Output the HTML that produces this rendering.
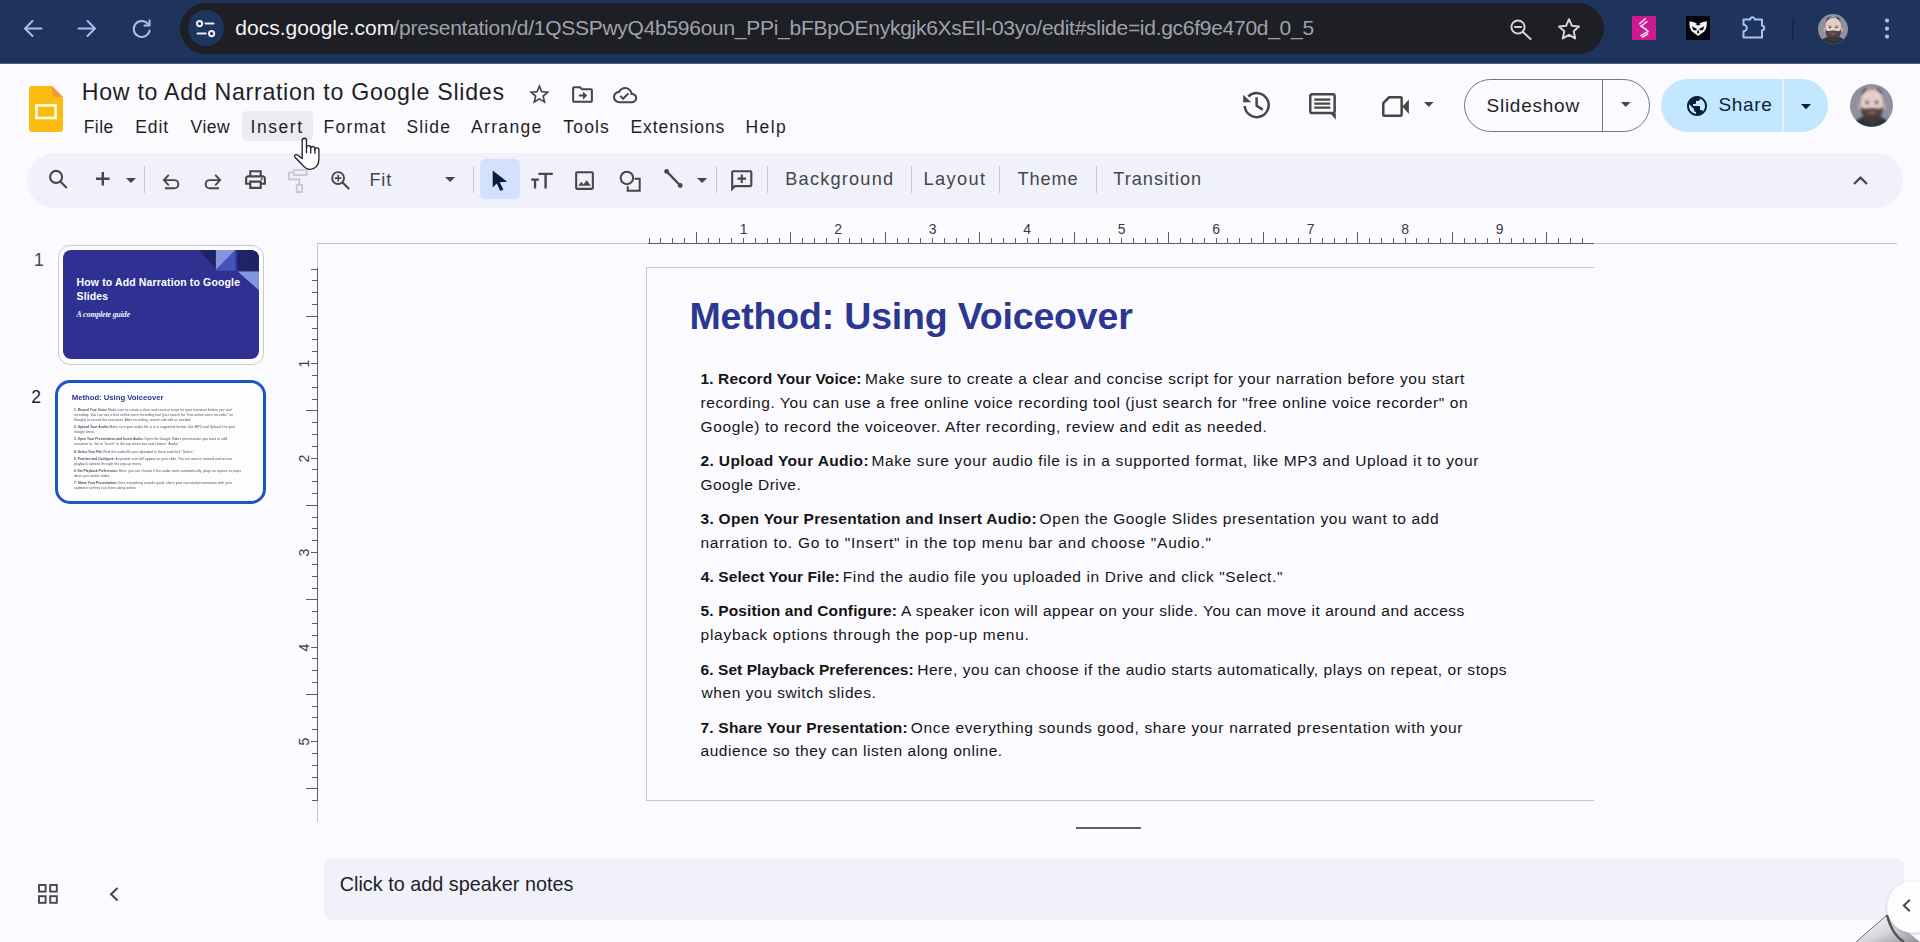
<!DOCTYPE html>
<html lang="en">
<head>
<meta charset="utf-8">
<title>How to Add Narration to Google Slides - Google Slides</title>
<style>
*{box-sizing:border-box;margin:0;padding:0}
html,body{width:1920px;height:942px;overflow:hidden;background:#fbfaff;font-family:"Liberation Sans",sans-serif;color:#1f1f1f}
.abs{position:absolute}
#chrome{position:absolute;left:0;top:0;width:1920px;height:64px;background:#1e345d;border-bottom:1px solid #4b6592}
#chrome .strip{position:absolute;left:0;top:57px;width:1920px;height:6px;background:#1c3158}
#omni{position:absolute;left:180px;top:3px;width:1424px;height:51px;border-radius:26px;background:#1e1f25}
#omni .site{position:absolute;left:7.500px;top:7.300px;width:36px;height:36px;border-radius:50%;background:#1e345d}
.url{position:absolute;left:56px;top:11px;font-size:20.5px;line-height:28px;white-space:nowrap;color:#9b9da6;letter-spacing:0px}
.url b{font-weight:normal;color:#f1f1f3}
svg{position:absolute;overflow:visible}
.t{position:absolute;white-space:nowrap;line-height:1}
#app{position:absolute;left:0;top:64px;width:1920px;height:878px;background:#fbfaff}
.menu{font-size:17.6px;color:#1f1f1f}
.tb{font-size:17.6px;color:#444746}
.sep{position:absolute;width:1px;background:#c7c7cc;top:166px;height:27px}

.urla{color:#f2f2f4}.urlb{color:#9ea2ae}
.avatar{border-radius:50%;overflow:hidden;background:radial-gradient(circle at 50% 38%,#d9b9a3 0 26%,rgba(0,0,0,0) 27%),radial-gradient(ellipse at 50% 60%,#3a2a22 0 30%,rgba(0,0,0,0) 31%),radial-gradient(ellipse at 50% 105%,#2c2f3a 0 38%,rgba(0,0,0,0) 39%),linear-gradient(#9aa3b0,#7f8894)}
.doctitle{color:#1f1f1f}
.btnl{color:#1f1f1f}.sharel{color:#0b1d3e}
.num{color:#444746}.num.sel{color:#1f1f1f}
.stitle{color:#2c3792}
.body{color:#141416}
.notes{color:#1f1f1f}
.rl{font-size:14px;color:#3a3b40;line-height:13px;height:13px}
.rv{transform:rotate(-90deg);transform-origin:50% 50%}
#th2 .body{color:#4a4a50}
</style>
</head>
<body>
<div id="app"></div>
<div id="chrome">
  <div class="strip"></div>
  <!-- back -->
  <svg style="left:22px;top:18px" width="22" height="22" viewBox="0 0 22 22" fill="none" stroke="#a9bdee" stroke-width="2" stroke-linecap="round" stroke-linejoin="round"><path d="M19.5 10.5H3.5M10.5 3L3 10.5 10.5 18"/></svg>
  <!-- forward -->
  <svg style="left:76px;top:18px" width="22" height="22" viewBox="0 0 22 22" fill="none" stroke="#a9bdee" stroke-width="2" stroke-linecap="round" stroke-linejoin="round"><path d="M2.5 10.5H18.5M11.5 3L19 10.5 11.5 18"/></svg>
  <!-- reload -->
  <svg style="left:131px;top:18px" width="22" height="22" viewBox="0 0 22 22" fill="none" stroke="#a9bdee" stroke-width="2" stroke-linecap="round" stroke-linejoin="round"><path d="M17.2 6.2A8 8 0 1 0 18.6 12.6"/><path d="M18.6 2.2V7.4H13.4"/></svg>
  <div id="omni">
    <div class="site"></div>
    <!-- tune icon -->
    <svg style="left:16px;top:17px" width="20" height="18" viewBox="0 0 20 18" fill="none" stroke="#e9ecf5" stroke-width="2" stroke-linecap="round"><circle cx="3.6" cy="3.6" r="2.6"/><path d="M9.5 3.6H17.5"/><circle cx="15.6" cy="13.6" r="2.6"/><path d="M1.5 13.6H9.8"/></svg>
    <!-- zoom out magnifier -->
    <svg style="left:1330px;top:16px" width="22" height="21" viewBox="0 0 22 21" fill="none" stroke="#d3d4da" stroke-width="2" stroke-linecap="round"><circle cx="8" cy="8" r="6.6"/><path d="M13 13L20.5 20"/><path d="M5 8H11" stroke-width="2.2"/></svg>
    <!-- star -->
    <svg style="left:1377px;top:14px" width="24" height="23" viewBox="0 0 24 23" fill="none" stroke="#d3d4da" stroke-width="2" stroke-linejoin="round"><path d="M12 2.2l2.95 6.6 7.05.75-5.3 4.8 1.5 7.05L12 17.8 5.8 21.4l1.5-7.05L2 9.55l7.05-.75z"/></svg>
  </div>
  <span class="t urla" style="left:235.30px;top:17.30px;font-size:21px;letter-spacing:0.014px">docs.google.com</span><span class="t urlb" style="left:393.50px;top:17.30px;font-size:21px;letter-spacing:-0.278px">/presentation/d/1QSSPwyQ4b596oun_PPi_bFBpOEnykgjk6XsEIl-03yo/edit#slide=id.gc6f9e470d_0_5</span>
  <!-- ext 1 pink -->
  <div class="abs" style="left:1632px;top:16px;width:24px;height:24px;background:#cd1b8f"></div>
  <svg style="left:1632px;top:16px" width="24" height="24" viewBox="0 0 24 24" fill="none" stroke="#e9e4fb" stroke-width="1.500" stroke-linecap="round"><path d="M13.300 2.700L7.600 7.800M14.800 5.600L9.200 10.300 14.200 13.400M9 9.600L15.200 14.800M16.200 15.400L8.800 19.600M15.800 18L10.400 21.200"/></svg>
  <!-- ext 2 black owl -->
  <div class="abs" style="left:1686.300px;top:16px;width:24px;height:24px;background:#04040a"></div>
  <svg style="left:1686.300px;top:16px" width="24" height="24" viewBox="0 0 24 24"><path d="M3.500 5.200C6.500 5.600 9.500 6.600 12.100 8.200 14.700 6.600 17.700 5.600 20.800 5.200 21 9.500 20.300 13.200 18.200 15.600L12.100 20 6 15.600C3.900 13.200 3.200 9.500 3.500 5.200z" fill="#f4f4f6"/><path d="M5.800 10.200L10.800 12.700 10.400 14.600 7.200 14zM18.400 10.200L13.400 12.700 13.800 14.600 17 14zM12.100 13.500L13.200 16.200 12.100 18 11 16.200zM9.500 8.300L12.100 9.600 14.700 8.300 12.100 7.100z" fill="#04040a"/></svg>
  <!-- puzzle -->
  <svg style="left:1740px;top:12px" width="30" height="30" viewBox="1740 12 30 30" fill="none" stroke="#a9c1f4" stroke-width="2" stroke-linejoin="round"><path d="M1743.500 19.400H1750.300a2.200 2.200 0 0 1 4.400 0H1762V25.800a2.200 2.200 0 0 1 0 4.400V37.400H1743.500V31.300a3.300 3.300 0 0 0 0-6.600z"/></svg>
  <div class="abs" style="left:1792px;top:18px;width:2px;height:22px;background:#15284d;border-radius:1px"></div>
  <!-- avatar -->
  <svg style="left:1818px;top:14px" width="30" height="30" viewBox="0 0 43 43"><defs><clipPath id="ac1"><circle cx="21.5" cy="21.5" r="21.5"/></clipPath><filter id="ab1" x="-10%" y="-10%" width="120%" height="120%"><feGaussianBlur stdDeviation=".8"/></filter></defs><g clip-path="url(#ac1)"><rect width="43" height="43" fill="#90919e"/><g filter="url(#ab1)"><path d="M2 43C4 36 11 33.500 15 32.500L28 32.500C33 33.500 39 36 41 43z" fill="#2b3142"/><ellipse cx="21.800" cy="9" rx="10.200" ry="6" fill="#56535a"/><path d="M17 5.500C20 3 24 3.200 26.500 6" stroke="#d8d8de" stroke-width="1.200" fill="none"/><ellipse cx="9.600" cy="22.800" rx="1.600" ry="2.800" fill="#d9aea6"/><ellipse cx="34.200" cy="22.800" rx="1.600" ry="2.800" fill="#d9aea6"/><ellipse cx="21.900" cy="18" rx="11.200" ry="12.600" fill="#e4cec7"/><path d="M10.800 21.500C10.500 31 15 39.200 21.900 39.200S33.300 31 33 21.500C31.500 25 29 24.600 26.500 24.300 23.500 23.500 20.300 23.500 17.300 24.300 14.800 24.600 12.300 25 10.800 21.500z" fill="#463a3b" opacity=".9"/><ellipse cx="21.900" cy="28.400" rx="3.300" ry="1" fill="#b9525e"/><ellipse cx="17.200" cy="19.300" rx="2" ry="1" fill="#5b4a49"/><ellipse cx="26.600" cy="19.300" rx="2" ry="1" fill="#5b4a49"/><path d="M14.500 17.300h5M24 17.300h5" stroke="#6b5752" stroke-width=".9"/></g></g></svg>
  <!-- dots -->
  <svg style="left:1883px;top:17px" width="8" height="24" viewBox="0 0 8 24" fill="#a9bdee"><circle cx="4" cy="3.6" r="2.100"/><circle cx="4" cy="11.700" r="2.100"/><circle cx="4" cy="19.600" r="2.100"/></svg>
</div>

<!-- slides logo -->
<svg style="left:29px;top:86px" width="34" height="46" viewBox="0 0 34 46"><path d="M3 0H23L34 11V43a3 3 0 0 1-3 3H3a3 3 0 0 1-3-3V3a3 3 0 0 1 3-3z" fill="#fbbc12"/><path d="M23 0L34 11H26a3 3 0 0 1-3-3z" fill="#f19a3e"/><rect x="7.400" y="19.400" width="19.200" height="12.600" fill="none" stroke="#fff9e6" stroke-width="2.600"/></svg>
<span class="t doctitle" style="left:81.75px;top:80.75px;font-size:23.2px;letter-spacing:0.701px">How to Add Narration to Google Slides</span>
<!-- star -->
<svg style="left:527px;top:82px" width="24.800" height="24.800" viewBox="0 0 24 24" fill="#444746"><path d="M22 9.240l-7.190-.620L12 2 9.190 8.630 2 9.240l5.460 4.730L5.820 21 12 17.270 18.180 21l-1.630-7.030L22 9.240zM12 15.400l-3.760 2.270 1-4.280-3.320-2.880 4.380-.380L12 6.100l1.710 4.040 4.380.380-3.320 2.880 1 4.280L12 15.400z"/></svg>
<!-- folder move -->
<svg style="left:570px;top:82.300px" width="25" height="25" viewBox="0 0 24 24" fill="#444746"><path d="M20 6h-8l-2-2H4c-1.100 0-2 .900-2 2v12c0 1.100.900 2 2 2h16c1.100 0 2-.900 2-2V8c0-1.100-.900-2-2-2zm0 12H4V6h5.170l2 2H20v10zm-7.500-1l4-4-4-4v3H8.500v2h4v3z"/></svg>
<!-- cloud done -->
<svg style="left:613.300px;top:82.600px" width="24.200" height="24.200" viewBox="0 0 24 24" fill="#444746"><path d="M19.350 10.040A7.490 7.490 0 0 0 12 4C9.110 4 6.600 5.640 5.350 8.040A5.994 5.994 0 0 0 0 14c0 3.310 2.690 6 6 6h13c2.760 0 5-2.240 5-5 0-2.640-2.050-4.780-4.650-4.960zM19 18H6c-2.210 0-4-1.790-4-4s1.790-4 4-4h.710C7.370 7.690 9.480 6 12 6c3.040 0 5.500 2.460 5.500 5.500v.500H19c1.660 0 3 1.340 3 3s-1.340 3-3 3zm-9-3.820l-2.090-2.090L6.500 13.500 10 17l6.010-6.010-1.410-1.410z"/></svg>
<!-- menu highlight -->
<div class="abs" style="left:242px;top:111px;width:71.400px;height:29.600px;border-radius:5px;background:#ebebf1"></div>
<span class="t menu" style="left:83.75px;top:118.50px;font-size:17.5px;letter-spacing:0.417px">File</span>
<span class="t menu" style="left:135.25px;top:118.50px;font-size:17.5px;letter-spacing:0.917px">Edit</span>
<span class="t menu" style="left:190.60px;top:118.50px;font-size:17.5px;letter-spacing:0.467px">View</span>
<span class="t menu" style="left:250.50px;top:118.50px;font-size:17.5px;letter-spacing:1.55px">Insert</span>
<span class="t menu" style="left:323.50px;top:118.50px;font-size:17.5px;letter-spacing:1.3px">Format</span>
<span class="t menu" style="left:406.50px;top:118.50px;font-size:17.5px;letter-spacing:1.125px">Slide</span>
<span class="t menu" style="left:471.00px;top:118.50px;font-size:17.5px;letter-spacing:1.333px">Arrange</span>
<span class="t menu" style="left:563.30px;top:118.50px;font-size:17.5px;letter-spacing:1.175px">Tools</span>
<span class="t menu" style="left:630.50px;top:118.50px;font-size:17.5px;letter-spacing:0.911px">Extensions</span>
<span class="t menu" style="left:745.50px;top:118.50px;font-size:17.5px;letter-spacing:1.4px">Help</span>
<!-- history -->
<svg style="left:1242.500px;top:91.900px" width="27" height="27" viewBox="0 0 27 27" fill="none" stroke="#444746" stroke-width="2.500"><path d="M5.300 4.500A12 12 0 1 1 1.700 14" /><path d="M13.600 5.300V13.700L19.800 17.600" stroke-linejoin="miter"/><path d="M0.200 2.700V10.200H8.200z" fill="#444746" stroke="none"/></svg>
<!-- comment -->
<svg style="left:1309px;top:92.800px" width="27" height="27" viewBox="0 0 27 27"><rect x="1.250" y="1.250" width="24.400" height="18.800" rx="1.800" fill="none" stroke="#444746" stroke-width="2.500"/><path d="M21.400 20.500H26.900V26.700z" fill="#444746"/><path d="M5.300 6.600H21.300M5.300 10.650H21.300M5.300 14.700H21.300" stroke="#444746" stroke-width="2.200"/></svg>
<!-- video -->
<svg style="left:1381.900px;top:95.900px" width="28" height="21" viewBox="0 0 28 21"><path d="M7.100 1.250H18.400a1.250 1.250 0 0 1 1.250 1.250V18.500a1.250 1.250 0 0 1-1.250 1.250H2.500a1.250 1.250 0 0 1-1.250-1.250V7.100z" fill="none" stroke="#444746" stroke-width="2.500" stroke-linejoin="round"/><path d="M20.400 10.600L26.900 3.500V17.900z" fill="#444746"/></svg>
<svg style="left:1424.200px;top:102px" width="9.600" height="5" viewBox="0 0 9.600 5"><path d="M0 0H9.600L4.800 5z" fill="#444746"/></svg>
<!-- slideshow button -->
<div class="abs" style="left:1464px;top:79px;width:185.500px;height:53px;border:1px solid #747775;border-radius:27px"></div>
<div class="abs" style="left:1602px;top:79.500px;width:1px;height:52px;background:#747775"></div>
<span class="t btnl" style="left:1486.50px;top:96.00px;font-size:19px;letter-spacing:0.75px">Slideshow</span>
<svg style="left:1620.500px;top:102px" width="9.600" height="5" viewBox="0 0 9.600 5"><path d="M0 0H9.600L4.800 5z" fill="#444746"/></svg>
<!-- share button -->
<div class="abs" style="left:1661px;top:79px;width:167px;height:53px;border-radius:27px;background:#c2e7ff"></div>
<div class="abs" style="left:1782px;top:79px;width:1.500px;height:53px;background:#e4f3ff"></div>
<svg style="left:1684.500px;top:93.600px" width="24" height="24" viewBox="0 0 24 24" fill="#0b1d3e"><path d="M12 2C6.480 2 2 6.480 2 12s4.480 10 10 10 10-4.480 10-10S17.520 2 12 2zm-1 17.930c-3.950-.490-7-3.850-7-7.930 0-.620.080-1.210.210-1.790L9 15v1c0 1.100.900 2 2 2v1.930zm6.900-2.540c-.260-.810-1-1.390-1.900-1.390h-1v-3c0-.550-.450-1-1-1H8v-2h2c.550 0 1-.450 1-1V7h2c1.100 0 2-.900 2-2v-.410c2.930 1.190 5 4.060 5 7.410 0 2.080-.800 3.970-2.100 5.390z"/></svg>
<span class="t sharel" style="left:1718.50px;top:95.30px;font-size:19px;letter-spacing:0.625px">Share</span>
<svg style="left:1801px;top:103.700px" width="10" height="5.200" viewBox="0 0 10 5.200"><path d="M0 0H10L5 5.200z" fill="#0b1d3e"/></svg>
<!-- avatar -->
<svg style="left:1850px;top:84px" width="43" height="43" viewBox="0 0 43 43"><defs><clipPath id="ac2"><circle cx="21.5" cy="21.5" r="21.5"/></clipPath><filter id="ab2" x="-10%" y="-10%" width="120%" height="120%"><feGaussianBlur stdDeviation=".8"/></filter></defs><g clip-path="url(#ac2)"><rect width="43" height="43" fill="#90919e"/><g filter="url(#ab2)"><path d="M2 43C4 36 11 33.500 15 32.500L28 32.500C33 33.500 39 36 41 43z" fill="#2b3142"/><ellipse cx="21.800" cy="9" rx="10.200" ry="6" fill="#56535a"/><path d="M17 5.500C20 3 24 3.200 26.500 6" stroke="#d8d8de" stroke-width="1.200" fill="none"/><ellipse cx="9.600" cy="22.800" rx="1.600" ry="2.800" fill="#d9aea6"/><ellipse cx="34.200" cy="22.800" rx="1.600" ry="2.800" fill="#d9aea6"/><ellipse cx="21.900" cy="18" rx="11.200" ry="12.600" fill="#e4cec7"/><path d="M10.800 21.500C10.500 31 15 39.200 21.900 39.200S33.300 31 33 21.500C31.500 25 29 24.600 26.500 24.300 23.500 23.500 20.300 23.500 17.300 24.300 14.800 24.600 12.300 25 10.800 21.500z" fill="#463a3b" opacity=".9"/><ellipse cx="21.900" cy="28.400" rx="3.300" ry="1" fill="#b9525e"/><ellipse cx="17.200" cy="19.300" rx="2" ry="1" fill="#5b4a49"/><ellipse cx="26.600" cy="19.300" rx="2" ry="1" fill="#5b4a49"/><path d="M14.500 17.300h5M24 17.300h5" stroke="#6b5752" stroke-width=".9"/></g></g></svg>
<!-- hand cursor -->
<svg style="left:294px;top:138px;z-index:20" width="26" height="33" viewBox="0 0 26 33" fill="#ffffff" stroke="#1d1d28" stroke-width="1.300" stroke-linejoin="round" stroke-linecap="round"><path d="M8.200 19.500V2.400a2.150 2.150 0 0 1 4.300 0V9.600a2.100 2.100 0 0 1 4.200.300v.500a2.100 2.100 0 0 1 4.200.500v.800a2 2 0 0 1 4 .500V21.500c0 6-4 9.800-8.600 9.800-3.400 0-5.500-1.400-8-4.500L1 19.200c-1.300-1.600.800-3.400 2.400-2.200L8.200 20.600z"/><path d="M12.500 9.600V14.800M16.700 10.400V15M20.900 11.200V15.200" fill="none"/></svg>

<div class="abs" style="left:27px;top:152.500px;width:1875.500px;height:55px;border-radius:27.500px;background:#f0f1fb"></div>
<!-- search -->
<svg style="left:48px;top:169px" width="20" height="20" viewBox="0 0 20 20" fill="none" stroke="#444746" stroke-width="2.100"><circle cx="8.100" cy="7.900" r="6"/><path d="M12.300 12.400L18.800 19" stroke-linecap="butt"/></svg>
<!-- plus -->
<svg style="left:95.500px;top:172.200px" width="13.600" height="13.600" viewBox="0 0 13.600 13.600" stroke="#444746" stroke-width="2.400"><path d="M0 6.800H13.600M6.800 0V13.600"/></svg>
<svg style="left:126.200px;top:177.800px" width="10" height="5" viewBox="0 0 10 5"><path d="M0 0H10L5 5z" fill="#444746"/></svg>
<div class="sep" style="left:144px"></div>
<!-- undo -->
<svg style="left:163px;top:173.500px" width="16" height="16" viewBox="0 0 16 16" fill="none" stroke="#444746" stroke-width="1.900" stroke-linejoin="miter"><path d="M5.800 0.800L0.900 6.100 5.800 11.400"/><path d="M1.200 6.100H11.300a4.050 4.050 0 0 1 0 8.100H2"/></svg>
<!-- redo -->
<svg style="left:205px;top:173.500px" width="16" height="16" viewBox="0 0 16 16" fill="none" stroke="#444746" stroke-width="1.900" stroke-linejoin="miter"><path d="M10.200 0.800L15.100 6.100 10.200 11.400"/><path d="M14.800 6.100H4.700a4.050 4.050 0 0 0 0 8.100H14"/></svg>
<!-- print -->
<svg style="left:243.100px;top:167.300px" width="25" height="25" viewBox="0 0 24 24" fill="#444746"><path d="M19 8h-1V3H6v5H5c-1.660 0-3 1.340-3 3v6h4v4h12v-4h4v-6c0-1.660-1.340-3-3-3zM8 5h8v3H8V5zm8 12v2H8v-4h8v2zm2-2v-2H6v2H4v-4c0-.550.450-1 1-1h14c.550 0 1 .450 1 1v4h-2z"/><circle cx="18" cy="11.500" r="1"/></svg>
<!-- paint format (disabled) -->
<svg style="left:288px;top:169px" width="20" height="24" viewBox="0 0 20 24" fill="none" stroke="#c5c5ca" stroke-width="1.700"><rect x="5.700" y="1" width="13" height="5"/><path d="M5.700 3.500H1V10.400H11.400V16"/><rect x="8.700" y="16" width="5.400" height="7"/></svg>
<!-- zoom in -->
<svg style="left:331px;top:171px" width="19" height="19" viewBox="0 0 19 19" fill="none" stroke="#444746" stroke-width="1.900"><circle cx="7.100" cy="7.100" r="5.950"/><path d="M11.600 11.600L18.100 18.100" stroke-width="2.100"/><path d="M3.800 7.100H10.400M7.100 3.800V10.400" stroke-width="1.600"/></svg>
<svg style="left:445px;top:177.300px" width="10.200" height="5" viewBox="0 0 10.200 5"><path d="M0 0H10.200L5.100 5z" fill="#444746"/></svg>
<div class="sep" style="left:473px"></div>
<!-- select -->
<div class="abs" style="left:479.700px;top:159.200px;width:40px;height:39.600px;border-radius:5px;background:#d3e1fc"></div>
<svg style="left:492px;top:170px" width="16" height="22" viewBox="0 0 16 22"><path d="M0.700 0.600V17.400L4.700 13.500 8.400 21 11.400 19.500 7.700 12.300 15.200 11.700z" fill="#0b1d3e"/></svg>
<!-- text box TT -->
<svg style="left:531px;top:172px" width="23" height="17" viewBox="0 0 23 17" fill="#444746"><path d="M0.200 6.400H7.900V8.700H5.200V16.600H2.900V8.700H0.200zM7.400 0.700H21.800V3H15.800V16.600H13.400V3H7.400z"/></svg>
<!-- image -->
<svg style="left:572.300px;top:168px" width="25" height="25" viewBox="0 0 24 24" fill="#444746"><path d="M19 5v14H5V5h14m0-2H5c-1.100 0-2 .900-2 2v14c0 1.100.900 2 2 2h14c1.100 0 2-.900 2-2V5c0-1.100-.900-2-2-2zm-4.860 8.860l-3 3.870L9 13.140 6 17h12l-3.860-5.140z"/></svg>
<!-- shape -->
<svg style="left:619px;top:169.500px" width="23" height="23" viewBox="0 0 23 23" fill="none" stroke="#444746" stroke-width="2"><circle cx="7.900" cy="7.900" r="6.250"/><path d="M15.500 8.700H20.700V20.700H8.700V16.300"/></svg>
<!-- line -->
<svg style="left:663px;top:168px" width="21" height="21" viewBox="0 0 21 21"><path d="M3.600 3.400L17.200 17.500" stroke="#444746" stroke-width="2.300"/><circle cx="3.600" cy="3.400" r="2.400" fill="#444746"/><circle cx="17.200" cy="17.500" r="2.400" fill="#444746"/></svg>
<svg style="left:697.300px;top:178px" width="10.200" height="5" viewBox="0 0 10.200 5"><path d="M0 0H10.200L5.100 5z" fill="#444746"/></svg>
<div class="sep" style="left:715.500px"></div>
<!-- add comment (tail left) -->
<svg style="left:728.500px;top:167.700px" width="25.500" height="25.500" viewBox="0 0 24 24" fill="#444746"><g transform="translate(24 0) scale(-1 1)"><path d="M22 4c0-1.100-.900-2-2-2H4c-1.100 0-2 .900-2 2v12c0 1.100.900 2 2 2h14l4 4V4zM4 4h16v13.170L18.830 16H4V4zm7 5H8v2h3v3h2v-3h3V9h-3V6h-2v3z"/></g></svg>
<div class="sep" style="left:767px"></div>
<div class="sep" style="left:910.500px"></div>
<div class="sep" style="left:998.500px"></div>
<div class="sep" style="left:1095.500px"></div>
<span class="t tb" style="left:369.50px;top:170.70px;font-size:18.2px;letter-spacing:0.75px">Fit</span>
<span class="t tb" style="left:785.30px;top:170.20px;font-size:18.2px;letter-spacing:1.189px">Background</span>
<span class="t tb" style="left:923.50px;top:170.20px;font-size:18.2px;letter-spacing:1.4px">Layout</span>
<span class="t tb" style="left:1017.50px;top:170.20px;font-size:18.2px;letter-spacing:0.875px">Theme</span>
<span class="t tb" style="left:1113.30px;top:170.20px;font-size:18.2px;letter-spacing:0.967px">Transition</span>
<!-- collapse chevron -->
<svg style="left:1853px;top:175.500px" width="15" height="9" viewBox="0 0 15 9" fill="none" stroke="#444746" stroke-width="2.200"><path d="M1 8L7.500 1.600 14 8"/></svg>

<span class="t num" style="left:34.00px;top:251.50px;font-size:17.5px;letter-spacing:0px">1</span>
<div class="abs" style="left:57.500px;top:245px;width:206px;height:119.500px;border:1px solid #c8c8cf;border-radius:12px;background:#fdfcff"></div>
<div class="abs" id="th1" style="left:62.800px;top:249.900px;width:195.800px;height:109.300px;border-radius:8px;background:#2e3191;overflow:hidden">
  <svg style="left:130px;top:0" width="66" height="45" viewBox="0 0 66 45"><defs><pattern id="hp" width="2" height="2" patternUnits="userSpaceOnUse" patternTransform="rotate(45)"><rect width="2" height="2" fill="#181c55"/><rect width="1" height="2" fill="#252a78"/></pattern></defs>
    <path d="M5.700 0H22.900V19.100z" fill="url(#hp)"/>
    <path d="M22.900 0H42.600L22.900 20.100z" fill="#8495e0"/>
    <path d="M42.600 0V20.700H22.900V20.100z" fill="#4354b8"/>
    <rect x="44.500" y="0" width="21.500" height="20.700" fill="url(#hp)"/>
    <path d="M44.800 21.600H66V40.400z" fill="#8495e0"/>
  </svg>
  <span class="t" style="left:13.700px;top:25.600px;font-size:10.500px;font-weight:700;color:#fff;line-height:14px;white-space:normal;width:182px;letter-spacing:.14px">How to Add Narration to Google Slides</span>
  <span class="t" style="left:13.800px;top:61.600px;font-size:7.800px;font-weight:700;font-style:italic;font-family:'Liberation Serif',serif;color:#f3f3fb;letter-spacing:-.1px">A complete guide</span>
</div>
<span class="t num sel" style="left:31.20px;top:388.80px;font-size:17.5px;letter-spacing:0px">2</span>
<div class="abs" style="left:55.400px;top:380.200px;width:210.600px;height:124.100px;border:3.300px solid #1a56c6;border-radius:15px;background:#fdfcff"></div>
<div class="abs" id="th2" style="left:62.800px;top:387.400px;width:945px;height:532px;transform:scale(.2072);transform-origin:0 0;overflow:hidden">
<span class="t stitle" style="left:42.00px;top:29.90px;font-size:37.5px;letter-spacing:-0.182px;font-weight:700">Method: Using Voiceover</span>
<span class="t body" style="left:53.00px;top:102.70px;font-size:15.5px;letter-spacing:0.125px;font-weight:700">1. Record Your Voice:</span>
<span class="t body" style="left:217.50px;top:102.70px;font-size:15.5px;letter-spacing:0.601px">Make sure to create a clear and concise script for your narration before you start</span>
<span class="t body" style="left:53.00px;top:126.80px;font-size:15.5px;letter-spacing:0.595px">recording. You can use a free online voice recording tool (just search for "free online voice recorder" on</span>
<span class="t body" style="left:53.00px;top:150.70px;font-size:15.5px;letter-spacing:0.623px">Google) to record the voiceover. After recording, review and edit as needed.</span>
<span class="t body" style="left:53.00px;top:184.30px;font-size:15.5px;letter-spacing:0.365px;font-weight:700">2. Upload Your Audio:</span>
<span class="t body" style="left:223.90px;top:184.30px;font-size:15.5px;letter-spacing:0.643px">Make sure your audio file is in a supported format, like MP3 and Upload it to your</span>
<span class="t body" style="left:53.00px;top:208.50px;font-size:15.5px;letter-spacing:0.458px">Google Drive.</span>
<span class="t body" style="left:53.00px;top:242.30px;font-size:15.5px;letter-spacing:0.283px;font-weight:700">3. Open Your Presentation and Insert Audio:</span>
<span class="t body" style="left:392.00px;top:242.30px;font-size:15.5px;letter-spacing:0.624px">Open the Google Slides presentation you want to add</span>
<span class="t body" style="left:53.00px;top:266.50px;font-size:15.5px;letter-spacing:0.745px">narration to. Go to "Insert" in the top menu bar and choose "Audio."</span>
<span class="t body" style="left:53.30px;top:304.50px;font-size:15.5px;letter-spacing:0.089px;font-weight:700">4. Select Your File:</span>
<span class="t body" style="left:195.30px;top:304.50px;font-size:15.5px;letter-spacing:0.595px">Find the audio file you uploaded in Drive and click "Select."</span>
<span class="t body" style="left:53.00px;top:338.30px;font-size:15.5px;letter-spacing:0.14px;font-weight:700">5. Position and Configure:</span>
<span class="t body" style="left:253.50px;top:338.30px;font-size:15.5px;letter-spacing:0.509px">A speaker icon will appear on your slide. You can move it around and access</span>
<span class="t body" style="left:53.00px;top:362.50px;font-size:15.5px;letter-spacing:0.757px">playback options through the pop-up menu.</span>
<span class="t body" style="left:53.00px;top:397.80px;font-size:15.5px;letter-spacing:0.078px;font-weight:700">6. Set Playback Preferences:</span>
<span class="t body" style="left:269.70px;top:397.80px;font-size:15.5px;letter-spacing:0.554px">Here, you can choose if the audio starts automatically, plays on repeat, or stops</span>
<span class="t body" style="left:54.00px;top:420.30px;font-size:15.5px;letter-spacing:0.564px">when you switch slides.</span>
<span class="t body" style="left:53.00px;top:455.30px;font-size:15.5px;letter-spacing:0.204px;font-weight:700">7. Share Your Presentation:</span>
<span class="t body" style="left:263.30px;top:455.30px;font-size:15.5px;letter-spacing:0.656px">Once everything sounds good, share your narrated presentation with your</span>
<span class="t body" style="left:53.00px;top:478.40px;font-size:15.5px;letter-spacing:0.562px">audience so they can listen along online.</span>
</div>

<svg style="left:0;top:0" width="1920" height="942" shape-rendering="crispEdges">
<rect x="317" y="243" width="1580" height="1" fill="#c3c3cb"/>
<rect x="317" y="243" width="1" height="579" fill="#c3c3cb"/>
<rect x="648" y="243" width="946" height="1" fill="#5c5d63"/>
<rect x="317" y="268" width="1" height="533" fill="#5c5d63"/>
<path d="M649 243v-5h1v5zM660 243v-5h1v5zM672 243v-5h1v5zM684 243v-5h1v5zM696 243v-11h1v11zM708 243v-5h1v5zM719 243v-5h1v5zM731 243v-5h1v5zM743 243v-5h1v5zM755 243v-5h1v5zM767 243v-5h1v5zM779 243v-5h1v5zM790 243v-11h1v11zM802 243v-5h1v5zM814 243v-5h1v5zM826 243v-5h1v5zM838 243v-5h1v5zM849 243v-5h1v5zM861 243v-5h1v5zM873 243v-5h1v5zM885 243v-11h1v11zM897 243v-5h1v5zM908 243v-5h1v5zM920 243v-5h1v5zM932 243v-5h1v5zM944 243v-5h1v5zM956 243v-5h1v5zM968 243v-5h1v5zM979 243v-11h1v11zM991 243v-5h1v5zM1003 243v-5h1v5zM1015 243v-5h1v5zM1027 243v-5h1v5zM1038 243v-5h1v5zM1050 243v-5h1v5zM1062 243v-5h1v5zM1074 243v-11h1v11zM1086 243v-5h1v5zM1097 243v-5h1v5zM1109 243v-5h1v5zM1121 243v-5h1v5zM1133 243v-5h1v5zM1145 243v-5h1v5zM1157 243v-5h1v5zM1168 243v-11h1v11zM1180 243v-5h1v5zM1192 243v-5h1v5zM1204 243v-5h1v5zM1216 243v-5h1v5zM1227 243v-5h1v5zM1239 243v-5h1v5zM1251 243v-5h1v5zM1263 243v-11h1v11zM1275 243v-5h1v5zM1286 243v-5h1v5zM1298 243v-5h1v5zM1310 243v-5h1v5zM1322 243v-5h1v5zM1334 243v-5h1v5zM1346 243v-5h1v5zM1357 243v-11h1v11zM1369 243v-5h1v5zM1381 243v-5h1v5zM1393 243v-5h1v5zM1405 243v-5h1v5zM1416 243v-5h1v5zM1428 243v-5h1v5zM1440 243v-5h1v5zM1452 243v-11h1v11zM1464 243v-5h1v5zM1475 243v-5h1v5zM1487 243v-5h1v5zM1499 243v-5h1v5zM1511 243v-5h1v5zM1523 243v-5h1v5zM1535 243v-5h1v5zM1546 243v-11h1v11zM1558 243v-5h1v5zM1570 243v-5h1v5zM1582 243v-5h1v5z" fill="#5c5d63"/>
<path d="M317 269h-6v1h6zM317 280h-5v1h5zM317 292h-5v1h5zM317 304h-5v1h5zM317 316h-11v1h11zM317 328h-5v1h5zM317 339h-5v1h5zM317 351h-5v1h5zM317 363h-6v1h6zM317 375h-5v1h5zM317 387h-5v1h5zM317 399h-5v1h5zM317 410h-11v1h11zM317 422h-5v1h5zM317 434h-5v1h5zM317 446h-5v1h5zM317 458h-6v1h6zM317 469h-5v1h5zM317 481h-5v1h5zM317 493h-5v1h5zM317 505h-11v1h11zM317 517h-5v1h5zM317 528h-5v1h5zM317 540h-5v1h5zM317 552h-6v1h6zM317 564h-5v1h5zM317 576h-5v1h5zM317 588h-5v1h5zM317 599h-11v1h11zM317 611h-5v1h5zM317 623h-5v1h5zM317 635h-5v1h5zM317 647h-6v1h6zM317 658h-5v1h5zM317 670h-5v1h5zM317 682h-5v1h5zM317 694h-11v1h11zM317 706h-5v1h5zM317 717h-5v1h5zM317 729h-5v1h5zM317 741h-6v1h6zM317 753h-5v1h5zM317 765h-5v1h5zM317 777h-5v1h5zM317 788h-11v1h11zM317 800h-5v1h5z" fill="#5c5d63"/>
</svg>
<span class="t rl" style="left:733.6px;top:222.8px;width:20px;text-align:center">1</span>
<span class="t rl" style="left:828.1px;top:222.8px;width:20px;text-align:center">2</span>
<span class="t rl" style="left:922.6px;top:222.8px;width:20px;text-align:center">3</span>
<span class="t rl" style="left:1017.1px;top:222.8px;width:20px;text-align:center">4</span>
<span class="t rl" style="left:1111.6px;top:222.8px;width:20px;text-align:center">5</span>
<span class="t rl" style="left:1206.1px;top:222.8px;width:20px;text-align:center">6</span>
<span class="t rl" style="left:1300.6px;top:222.8px;width:20px;text-align:center">7</span>
<span class="t rl" style="left:1395.1px;top:222.8px;width:20px;text-align:center">8</span>
<span class="t rl" style="left:1489.6px;top:222.8px;width:20px;text-align:center">9</span>
<span class="t rl rv" style="left:293.5px;top:357.1px;width:20px;text-align:center">1</span>
<span class="t rl rv" style="left:293.5px;top:451.6px;width:20px;text-align:center">2</span>
<span class="t rl rv" style="left:293.5px;top:546.1px;width:20px;text-align:center">3</span>
<span class="t rl rv" style="left:293.5px;top:640.6px;width:20px;text-align:center">4</span>
<span class="t rl rv" style="left:293.5px;top:735.1px;width:20px;text-align:center">5</span>

<div class="abs" style="left:646px;top:267px;width:948px;height:534px;border:1px solid #c6c6cd;border-right:none"></div>
<span class="t stitle" style="left:689.50px;top:298.40px;font-size:37.5px;letter-spacing:-0.182px;font-weight:700">Method: Using Voiceover</span>
<span class="t body" style="left:700.50px;top:371.20px;font-size:15.5px;letter-spacing:0.125px;font-weight:700">1. Record Your Voice:</span>
<span class="t body" style="left:865.00px;top:371.20px;font-size:15.5px;letter-spacing:0.601px">Make sure to create a clear and concise script for your narration before you start</span>
<span class="t body" style="left:700.50px;top:395.30px;font-size:15.5px;letter-spacing:0.595px">recording. You can use a free online voice recording tool (just search for "free online voice recorder" on</span>
<span class="t body" style="left:700.50px;top:419.20px;font-size:15.5px;letter-spacing:0.623px">Google) to record the voiceover. After recording, review and edit as needed.</span>
<span class="t body" style="left:700.50px;top:452.80px;font-size:15.5px;letter-spacing:0.365px;font-weight:700">2. Upload Your Audio:</span>
<span class="t body" style="left:871.40px;top:452.80px;font-size:15.5px;letter-spacing:0.643px">Make sure your audio file is in a supported format, like MP3 and Upload it to your</span>
<span class="t body" style="left:700.50px;top:477.00px;font-size:15.5px;letter-spacing:0.458px">Google Drive.</span>
<span class="t body" style="left:700.50px;top:510.80px;font-size:15.5px;letter-spacing:0.283px;font-weight:700">3. Open Your Presentation and Insert Audio:</span>
<span class="t body" style="left:1039.50px;top:510.80px;font-size:15.5px;letter-spacing:0.624px">Open the Google Slides presentation you want to add</span>
<span class="t body" style="left:700.50px;top:535.00px;font-size:15.5px;letter-spacing:0.745px">narration to. Go to "Insert" in the top menu bar and choose "Audio."</span>
<span class="t body" style="left:700.80px;top:568.70px;font-size:15.5px;letter-spacing:0.089px;font-weight:700">4. Select Your File:</span>
<span class="t body" style="left:842.80px;top:568.70px;font-size:15.5px;letter-spacing:0.595px">Find the audio file you uploaded in Drive and click "Select."</span>
<span class="t body" style="left:700.50px;top:602.50px;font-size:15.5px;letter-spacing:0.14px;font-weight:700">5. Position and Configure:</span>
<span class="t body" style="left:901.00px;top:602.50px;font-size:15.5px;letter-spacing:0.509px">A speaker icon will appear on your slide. You can move it around and access</span>
<span class="t body" style="left:700.50px;top:626.70px;font-size:15.5px;letter-spacing:0.757px">playback options through the pop-up menu.</span>
<span class="t body" style="left:700.50px;top:662.00px;font-size:15.5px;letter-spacing:0.078px;font-weight:700">6. Set Playback Preferences:</span>
<span class="t body" style="left:917.20px;top:662.00px;font-size:15.5px;letter-spacing:0.554px">Here, you can choose if the audio starts automatically, plays on repeat, or stops</span>
<span class="t body" style="left:701.50px;top:684.50px;font-size:15.5px;letter-spacing:0.564px">when you switch slides.</span>
<span class="t body" style="left:700.50px;top:719.50px;font-size:15.5px;letter-spacing:0.204px;font-weight:700">7. Share Your Presentation:</span>
<span class="t body" style="left:910.80px;top:719.50px;font-size:15.5px;letter-spacing:0.656px">Once everything sounds good, share your narrated presentation with your</span>
<span class="t body" style="left:700.50px;top:742.60px;font-size:15.5px;letter-spacing:0.562px">audience so they can listen along online.</span>
<div class="abs" style="left:1076px;top:827px;width:65px;height:2px;background:#5f6066"></div>

<div class="abs" style="left:323.500px;top:857.500px;width:1580px;height:62px;border-radius:7px;background:#f0f1fb"></div>
<span class="t notes" style="left:339.70px;top:875.30px;font-size:19.8px;letter-spacing:0.024px">Click to add speaker notes</span>
<!-- grid icon -->
<svg style="left:38.300px;top:883.700px" width="20" height="20" viewBox="0 0 20 20" fill="none" stroke="#444746" stroke-width="1.900"><rect x="1" y="1" width="6.600" height="6.600"/><rect x="12.200" y="1" width="6.600" height="6.600"/><rect x="1" y="12.200" width="6.600" height="6.600"/><rect x="12.200" y="12.200" width="6.600" height="6.600"/></svg>
<!-- chevron left -->
<svg style="left:109px;top:886.600px" width="10" height="14.500" viewBox="0 0 10 14.500" fill="none" stroke="#444746" stroke-width="2"><path d="M8.600 1L2 7.250 8.600 13.500"/></svg>
<!-- page curl artifact -->
<svg style="left:1850px;top:905px" width="70" height="37" viewBox="0 0 70 37"><defs><linearGradient id="cg" x1="0" y1="0" x2="1" y2="1"><stop offset="0" stop-color="#fbfaff"/><stop offset=".55" stop-color="#d8d8dc"/><stop offset="1" stop-color="#8c8c92"/></linearGradient></defs><path d="M6 37L37 10 70 37z" fill="url(#cg)"/><path d="M6 37L37 10" stroke="#6e6e76" stroke-width="1" fill="none"/><path d="M37 10C40 22 46 32 54 37" stroke="#55555c" stroke-width="2.500" fill="none"/></svg>
<!-- side panel toggle -->
<div class="abs" style="left:1887px;top:881px;width:52px;height:52px;border-radius:50%;background:#fdfcff;box-shadow:0 1px 3px rgba(60,64,67,.28)"></div>
<svg style="left:1901.500px;top:899.300px" width="9" height="13" viewBox="0 0 9 13" fill="none" stroke="#444746" stroke-width="1.900"><path d="M7.800 0.800L1.800 6.500 7.800 12.200"/></svg>

</body>
</html>
